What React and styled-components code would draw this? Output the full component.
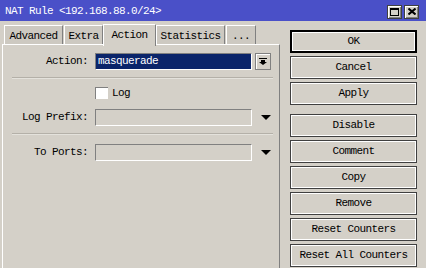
import React from "react";
import styled, { createGlobalStyle } from "styled-components";

const GlobalStyle = createGlobalStyle`
  html, body { margin: 0; padding: 0; background: #d4d0c8; }
  body {
    font-family: "Liberation Mono", "DejaVu Sans Mono", monospace;
    font-size: 11px;
    letter-spacing: -0.6px;
    color: #000;
  }
`;

const Window = styled.div`
  width: 426px;
  height: 268px;
  overflow: hidden;
  background: #d4d0c8;
  display: flex;
  flex-direction: column;
`;

const TitleBar = styled.div`
  height: 21px;
  flex: none;
  background: #4a50c8;
  color: #fff;
  display: flex;
  align-items: center;
  justify-content: space-between;
  padding: 0 7px 0 5px;
`;

const TitleText = styled.span`
  line-height: 1;
  padding-top: 1px;
`;

const TitleButtons = styled.div`
  display: flex;
  gap: 2px;
  margin-top: 2px;
`;

const TitleButton = styled.div`
  width: 15px;
  height: 14px;
  box-sizing: border-box;
  background: #d4d0c8;
  border: 1px solid #404040;
  box-shadow: inset 1px 1px 0 #fff, inset -1px -1px 0 #808080;
  display: flex;
  align-items: center;
  justify-content: center;
`;

const Body = styled.div`
  flex: 1;
  display: flex;
  padding: 3px 0 0 2px;
  min-height: 0;
`;

const LeftColumn = styled.div`
  width: 278px;
  display: flex;
  flex-direction: column;
`;

const TabStrip = styled.div`
  display: flex;
  align-items: flex-end;
  height: 21px;
  padding-left: 2px;
  position: relative;
  z-index: 1;
  margin-bottom: -1px;
`;

const Tab = styled.div`
  width: ${(p) => p.$w}px;
  height: ${(p) => (p.$active ? 22 : 19)}px;
  box-sizing: border-box;
  background: ${(p) => (p.$active ? "#d4d0c8" : "#cdc9c1")};
  border-top: 1px solid #fff;
  border-left: 1px solid #fff;
  border-right: 1px solid #808080;
  margin-right: 1px;
  display: flex;
  justify-content: center;
  padding-top: 5px;
  margin-bottom: ${(p) => (p.$active ? -1 : 1)}px;
  line-height: 1;
  ${(p) => (p.$active ? "margin-left:-1px; margin-right:0;" : "")}
`;

const Panel = styled.div`
  flex: 1;
  border-top: 1px solid #fff;
  border-left: 1px solid #fff;
  border-right: 1px solid #808080;
  display: flex;
  flex-direction: column;
`;

const Row = styled.div`
  display: flex;
  align-items: center;
  height: 18px;
  margin-top: ${(p) => p.$mt}px;
`;

const Label = styled.div`
  width: 85px;
  text-align: right;
  margin-right: 7px;
  line-height: 1;
`;

const Field = styled.div`
  width: 157px;
  height: 17px;
  box-sizing: border-box;
  border-top: 1px solid #808080;
  border-left: 1px solid #808080;
  border-bottom: 1px solid #fff;
  border-right: 1px solid #fff;
  background: ${(p) => (p.$selected ? "#0a246a" : "#d4d0c8")};
  color: #fff;
  display: flex;
  align-items: center;
  padding-left: 2px;
  line-height: 1;
`;

const DropButton = styled.div`
  width: 16px;
  height: 17px;
  box-sizing: border-box;
  margin-left: 3px;
  border: 1px solid #808080;
  box-shadow: inset 1px 1px 0 #fff;
  display: flex;
  align-items: center;
  justify-content: center;
`;

const ArrowSlot = styled.div`
  width: 16px;
  margin-left: 3px;
  display: flex;
  justify-content: center;
  padding-left: 3px;
`;

const Separator = styled.div`
  margin: ${(p) => p.$mt}px 6px 0 9px;
  height: 1px;
  background: #b4b0a8;
  border-bottom: 1px solid #e4e2dc;
`;

const CheckRow = styled.div`
  display: flex;
  align-items: center;
  margin-top: ${(p) => p.$mt}px;
  padding-left: 92px;
  height: 13px;
`;

const CheckBox = styled.div`
  width: 13px;
  height: 12px;
  box-sizing: border-box;
  background: #fff;
  border-top: 1px solid #808080;
  border-left: 1px solid #808080;
  margin-right: 4px;
`;

const RightColumn = styled.div`
  width: 127px;
  margin-left: 10px;
  padding-top: 6px;
  display: flex;
  flex-direction: column;
  gap: 3px;
`;

const Button = styled.div`
  height: 23px;
  box-sizing: border-box;
  border: 1px solid ${(p) => (p.$default ? "#000" : "#404040")};
  box-shadow: ${(p) =>
    p.$default
      ? "inset 0 0 0 1px #000, inset 0 0 0 2px #fff"
      : "inset 0 0 0 1px #fff"};
  display: flex;
  align-items: center;
  justify-content: center;
  line-height: 1;
  margin-top: ${(p) => p.$gapTop || 0}px;
`;

const DownTriangle = () => (
  <svg width="10" height="5" viewBox="0 0 10 5">
    <polygon points="0,0 10,0 5,5" fill="#000" />
  </svg>
);

const DropIcon = () => (
  <svg width="8" height="7" viewBox="0 0 8 7">
    <rect x="0" y="0" width="8" height="1" fill="#000" />
    <rect x="2" y="2" width="4" height="2" fill="#000" />
    <polygon points="0,4 8,4 4,7" fill="#000" />
  </svg>
);

const tabs = [
  { label: "Advanced", w: 59 },
  { label: "Extra", w: 39 },
  { label: "Action", w: 53, active: true },
  { label: "Statistics", w: 69 },
  { label: "...", w: 30 },
];

const buttons = [
  { label: "OK", def: true },
  { label: "Cancel" },
  { label: "Apply" },
  { label: "Disable", gap: 6 },
  { label: "Comment" },
  { label: "Copy" },
  { label: "Remove" },
  { label: "Reset Counters" },
  { label: "Reset All Counters" },
];

export default function App() {
  return (
    <>
      <GlobalStyle />
      <Window>
        <TitleBar>
          <TitleText>NAT Rule &lt;192.168.88.0/24&gt;</TitleText>
          <TitleButtons>
            <TitleButton>
              <svg width="9" height="8" viewBox="0 0 9 8">
                <rect x="0.5" y="0.5" width="8" height="7" fill="none" stroke="#000" />
                <rect x="0" y="0" width="9" height="2" fill="#000" />
              </svg>
            </TitleButton>
            <TitleButton>
              <svg width="8" height="7" viewBox="0 0 8 7">
                <path d="M0.5 0.5 L7.5 6.5 M7.5 0.5 L0.5 6.5" stroke="#000" strokeWidth="2" />
              </svg>
            </TitleButton>
          </TitleButtons>
        </TitleBar>
        <Body>
          <LeftColumn>
            <TabStrip>
              {tabs.map((t) => (
                <Tab key={t.label} $w={t.w} $active={t.active}>
                  {t.label}
                </Tab>
              ))}
            </TabStrip>
            <Panel>
              <Row $mt={7}>
                <Label>Action:</Label>
                <Field $selected>masquerade</Field>
                <DropButton>
                  <DropIcon />
                </DropButton>
              </Row>
              <Separator $mt={7} />
              <CheckRow $mt={7}>
                <CheckBox />
                <span>Log</span>
              </CheckRow>
              <Row $mt={9}>
                <Label>Log Prefix:</Label>
                <Field />
                <ArrowSlot>
                  <DownTriangle />
                </ArrowSlot>
              </Row>
              <Separator $mt={7} />
              <Row $mt={8}>
                <Label>To Ports:</Label>
                <Field />
                <ArrowSlot>
                  <DownTriangle />
                </ArrowSlot>
              </Row>
            </Panel>
          </LeftColumn>
          <RightColumn>
            {buttons.map((b) => (
              <Button key={b.label} $default={b.def} $gapTop={b.gap}>
                {b.label}
              </Button>
            ))}
          </RightColumn>
        </Body>
      </Window>
    </>
  );
}
